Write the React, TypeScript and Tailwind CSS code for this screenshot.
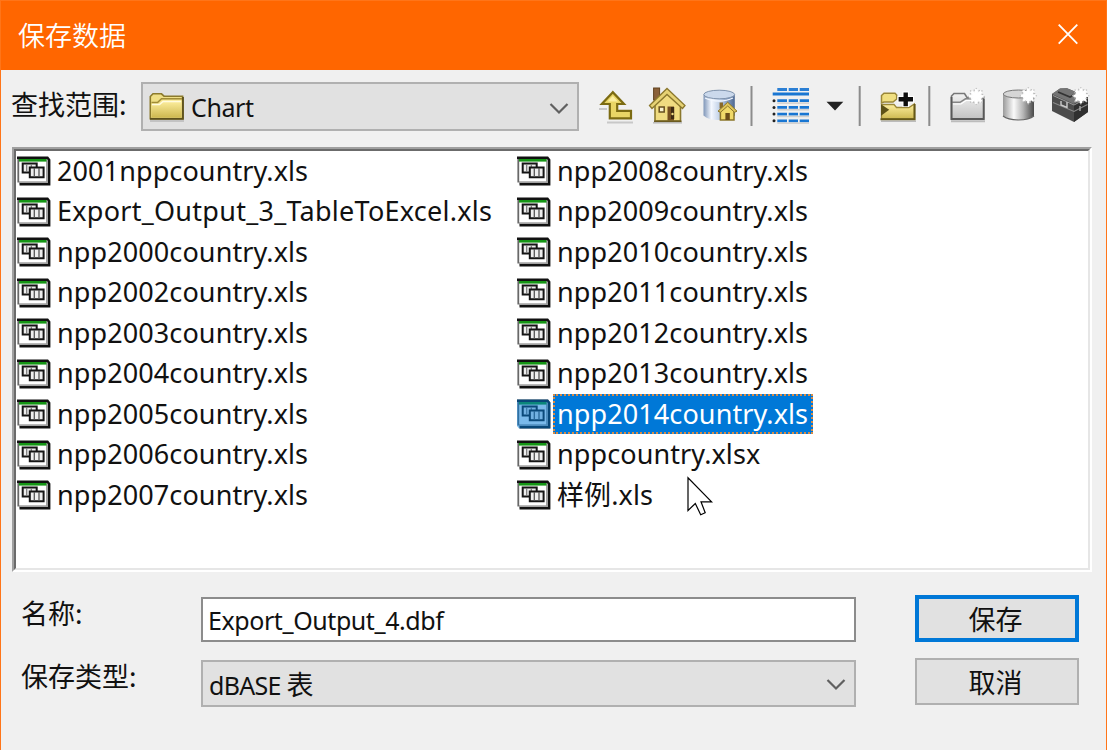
import React from "react";

const LATIN = "font-['Noto_Sans','Noto_Sans_CJK_SC',sans-serif]";
const CJK = "font-['Noto_Sans_CJK_SC',sans-serif]";

const leftFiles = [
  "2001nppcountry.xls",
  "Export_Output_3_TableToExcel.xls",
  "npp2000country.xls",
  "npp2002country.xls",
  "npp2003country.xls",
  "npp2004country.xls",
  "npp2005country.xls",
  "npp2006country.xls",
  "npp2007country.xls",
];

const rightFiles = [
  "npp2008country.xls",
  "npp2009country.xls",
  "npp2010country.xls",
  "npp2011country.xls",
  "npp2012country.xls",
  "npp2013country.xls",
  "npp2014country.xls",
  "nppcountry.xlsx",
  "样例.xls",
];

const SELECTED = "npp2014country.xls";

// Every toolbar icon shares one coordinate space; x is where its slice begins.
function ToolIcon({ x, w, children }: { x: number; w: number; children: React.ReactNode }) {
  return (
    <svg className="shrink-0" width={w} height={46} viewBox={`${x} 83 ${w} 46`} fill="none">
      {children}
    </svg>
  );
}

function Separator({ x, w, at }: { x: number; w: number; at: number }) {
  return (
    <ToolIcon x={x} w={w}>
      <rect x={at} y="86" width="2" height="40" fill="#8c8c8c" />
    </ToolIcon>
  );
}

function Sparkle({ cx, cy }: { cx: number; cy: number }) {
  const angles = [0, 45, 90, 135, 180, 225, 270, 315];
  return (
    <g transform={`translate(${cx} ${cy})`}>
      <circle r="5.8" fill="#fbfbfb" />
      {angles.map((a) => (
        <g key={a} transform={`rotate(${a})`}>
          <path d="M0 0V-7.5" stroke="#fff" strokeWidth="2.4" />
          <path d="M2.2 -5.2L3.4 -6.4" stroke="#b9b9b9" strokeWidth="1.1" />
          <circle cy="-8" r=".8" fill="#c6c6c6" />
        </g>
      ))}
    </g>
  );
}

function Gradients() {
  return (
    <svg width="0" height="0" className="absolute">
      <defs>
        <linearGradient id="gold" x1="0" y1="0" x2="0" y2="1">
          <stop offset="0" stopColor="#fff0a0" />
          <stop offset="1" stopColor="#cdb850" />
        </linearGradient>
        <linearGradient id="blueCyl" x1="0" y1="0" x2="1" y2="0">
          <stop offset="0" stopColor="#7f96b8" />
          <stop offset=".25" stopColor="#f4f8ff" />
          <stop offset=".55" stopColor="#b9cbe4" />
          <stop offset="1" stopColor="#4c6791" />
        </linearGradient>
        <linearGradient id="grayCyl" x1="0" y1="0" x2="1" y2="0">
          <stop offset="0" stopColor="#9a9a9a" />
          <stop offset=".35" stopColor="#fafafa" />
          <stop offset=".65" stopColor="#b5b5b5" />
          <stop offset="1" stopColor="#484848" />
        </linearGradient>
        <linearGradient id="grayFolder" x1="0" y1="0" x2="0" y2="1">
          <stop offset="0" stopColor="#f2f2f2" />
          <stop offset="1" stopColor="#c2c2c2" />
        </linearGradient>
      </defs>
    </svg>
  );
}

function FolderIcon() {
  return (
    <svg className="shrink-0" width="36" height="30" viewBox="149 92 36 30" fill="none">
      <path d="M150 121H184" stroke="#b9b9b9" strokeWidth="1.5" />
      <path d="M150.3 118.6V96.5L153 93.8H161.5L164 96.2H182.6V118.6Z" fill="#efdf86" stroke="#8b7a2c" strokeWidth="1.6" />
      <path d="M151.5 102.5H157.5L161.5 98.7H182" stroke="#a08c36" strokeWidth="1.4" />
      <path d="M151.5 104H159L162.5 100.5H181.6V117.5H151.5Z" fill="url(#gold)" />
      <path d="M152 104.5H159.5L163 101.5H181" stroke="#fffbe0" strokeWidth="1.4" />
      <path d="M150 118.8H183V97" stroke="#5d511c" strokeWidth="1.8" />
    </svg>
  );
}

function TableIcon({ selected }: { selected: boolean }) {
  return (
    <svg className="shrink-0" width="34" height="30" viewBox="0 0 34 30" fill="none">
      <path d="M.5 1H30L33.3 4V28.8H3L.5 26.5Z" fill="#fff" />
      <path d="M30 3V26.2H2" stroke="#a2a2a2" strokeWidth="2" />
      <path d="M1.3 1V26.5" stroke="#686868" strokeWidth="1.8" />
      <path d="M2 4.3H29.5" stroke="#159515" strokeWidth="2.6" />
      <path d="M0 1.7H30.5L32.2 3.8V28.2H2.5" stroke="#111" strokeWidth="2.4" />
      <path d="M5.7 7.4H19.7V16.4H5.7Z" fill="#eee" stroke="#151515" strokeWidth="2" />
      <path d="M9.7 8V16M14.3 8V16" stroke="#777" strokeWidth="1.2" />
      <path d="M12.8 11.6H26.6V21.2H12.8Z" fill="#eee" stroke="#151515" strokeWidth="2" />
      <path d="M17.3 12V21M22 12V21" stroke="#555" strokeWidth="1.3" />
      {selected && <path d="M0 .5H31L33.4 3.5V29.4H2L0 27Z" fill="#0078d7" fillOpacity=".52" />}
    </svg>
  );
}

function FileRow({ name }: { name: string }) {
  const selected = name === SELECTED;
  return (
    <div className="flex h-[40.5px] items-center pl-[0.6px]">
      <TableIcon selected={selected} />
      <span
        className={
          selected
            ? "ml-[2.4px] flex h-[40px] w-[260px] items-center whitespace-pre border-2 border-dotted border-[#d98b45] bg-[#0078d7] pb-[2px] pl-[2px] text-white"
            : "ml-[6.4px] flex h-[40px] items-center whitespace-pre pb-[2px]"
        }
      >
        <span className={name.startsWith("Export") ? "tracking-[0.27px]" : "tracking-[0.1px]"}>{name}</span>
      </span>
    </div>
  );
}

function Chevron() {
  return (
    <svg width="20" height="14" viewBox="0 0 20 14" fill="none">
      <path d="M1.5 3L10 11.5L18.5 3" stroke="#606060" strokeWidth="2.2" />
    </svg>
  );
}

function Toolbar() {
  return (
    <div className="flex items-center">
      <ToolIcon x={598} w={42}>
        <path d="M599 109H607M607 122.5H633" stroke="#c8c8c8" strokeWidth="2" />
        <path d="M612.8 92.2L601.8 104H609.8V118.3H631V110.8H617.2V104H624Z" fill="#e9d565" stroke="#7c6b12" strokeWidth="2.2" />
        <path d="M612.8 96L607.5 101.5H618" fill="#fbeea0" />
      </ToolIcon>
      <ToolIcon x={640} w={54}>
        <path d="M653 122.8H682" stroke="#bbb" strokeWidth="1.5" />
        <rect x="653.6" y="88" width="6" height="12" fill="#8a6039" stroke="#61431f" />
        <path d="M655 105L667 93.5L680.5 105V121H655Z" fill="#f0dc80" stroke="#8b782d" strokeWidth="1.6" />
        <path d="M649.5 105.5L667 88.5L685 105.5L682.5 108.5L667 94.5L652 108.5Z" fill="#e6d274" stroke="#8b782d" strokeWidth="1.3" />
        <rect x="659.2" y="107" width="5" height="5" fill="#f8f1ce" stroke="#67501f" strokeWidth="1.5" />
        <path d="M667.5 120.5V106.5H674V120.5" fill="#765020" />
        <rect x="671" y="107" width="3.2" height="12" fill="#3e2a12" />
        <circle cx="672.5" cy="114" r="1.2" fill="#f5e188" />
        <path d="M654 121.3H681.5" stroke="#6a5a20" strokeWidth="1.5" />
      </ToolIcon>
      <ToolIcon x={694} w={51}>
        <path d="M703.5 94.5V115.5Q708 120 719 120T734.8 115.5V94.5Z" fill="url(#blueCyl)" />
        <ellipse cx="719.2" cy="94.5" rx="15.4" ry="4.3" fill="#cbd9ec" stroke="#7f93ad" />
        <path d="M705 98Q711 101 719 101T733 98" stroke="#f2f7ff" strokeWidth="1.3" />
        <rect x="719.6" y="102.5" width="3.4" height="6" fill="#8a6a28" />
        <path d="M720.4 110L727.7 103.5L734 110V120H720.4Z" fill="#f0d969" stroke="#8b752a" strokeWidth="1.5" />
        <path d="M718 111.2L727.7 102.2L737 111.2L734.5 112.3L727.7 106L720.5 112.3Z" fill="#dfc65a" stroke="#8b752a" />
        <rect x="725.4" y="113" width="4.4" height="7" fill="#6b4d19" />
      </ToolIcon>
      <Separator x={745} w={12} at={750.5} />
      <ToolIcon x={757} w={63}>
        <path d="M777.3 89.5H787M788.7 89.5H798M799.7 89.5H809" stroke="#2b7fd4" strokeWidth="2.8" />
        <path d="M772.7 94H809" stroke="#1976d2" strokeWidth="3.2" />
        {[100.7, 107.4, 114.1, 120.8].map((y) => (
          <g key={y}>
            <circle cx="774" cy={y} r="1.5" fill="#222" />
            <path d={`M777.3 ${y}H787M788.7 ${y}H798M799.7 ${y}H809`} stroke="#1976d2" strokeWidth="2.8" />
            <path d={`M777.3 ${y + 2.4}H809`} stroke="#d0cfcd" strokeWidth="1.4" />
          </g>
        ))}
      </ToolIcon>
      <ToolIcon x={820} w={32}>
        <path d="M826.5 101.8H843.3L835 110.6Z" fill="#222" />
      </ToolIcon>
      <Separator x={852} w={14} at={858.7} />
      <ToolIcon x={866} w={56}>
        <path d="M881 121.2H916" stroke="#bbb" strokeWidth="1.5" />
        <path d="M881.5 103V95.5L884 93.2H895L896.7 95V99L893 102H884Z" fill="#f0df80" stroke="#9b8838" strokeWidth="1.5" />
        <path d="M881.5 119V104.5H894L896.5 107.5H909L914.3 104V119Z" fill="url(#gold)" stroke="#9b8838" strokeWidth="1.3" />
        <path d="M880.5 119.3H914.6V104" stroke="#655818" strokeWidth="2" />
        <path d="M881 104.3L889.2 109.8L881 115.8Z" fill="#5d5217" />
        <path d="M905.7 91.5V107M897.5 99.2H914" stroke="#fff" strokeWidth="6.5" />
        <path d="M905.7 92.5V106.2M898.6 99.2H913" stroke="#0d0d0d" strokeWidth="4.4" />
      </ToolIcon>
      <Separator x={922} w={14} at={928.3} />
      <ToolIcon x={936} w={58}>
        <path d="M951 121.2H985" stroke="#bcbcbc" strokeWidth="2" />
        <path d="M951.5 119V96L954 93.5H964.5L967 97.5H983.7V119Z" fill="url(#grayFolder)" stroke="#777" strokeWidth="1.6" />
        <path d="M952 102.3H960L965.5 98.8H983" stroke="#858585" strokeWidth="1.5" />
        <path d="M953 104H961L966 100.5H982" stroke="#fff" strokeWidth="1.2" />
        <path d="M951.5 97V119H983.7V99" stroke="#595959" strokeWidth="1.8" />
        <Sparkle cx={976.3} cy={96.5} />
      </ToolIcon>
      <ToolIcon x={994} w={50}>
        <path d="M1003 94V116Q1008 120 1018.5 120T1034 116V94Z" fill="url(#grayCyl)" />
        <path d="M1003 116Q1008 120 1018.5 120T1034 116" stroke="#666" strokeWidth="1.2" />
        <ellipse cx="1018.5" cy="94" rx="15.2" ry="4" fill="#d6d6d6" stroke="#777" />
        <Sparkle cx={1028.3} cy={95.7} />
      </ToolIcon>
      <ToolIcon x={1044} w={50}>
        <path d="M1052 94L1060 88.5L1067 88.2L1088 97V112L1074 122L1052 111Z" fill="#4c4c4c" />
        <path d="M1052 94L1060 88.5L1067 88.2L1088 97L1074 104Z" fill="#747474" />
        <path d="M1074 104L1088 97V112L1074 122Z" fill="#303030" />
        <path d="M1053 102.5L1074 111.5L1087.5 104.5" stroke="#8a8a8a" strokeWidth="1.1" />
        <path d="M1053 95.5L1074 105L1087.5 98" stroke="#999" strokeWidth="1" />
        <path d="M1061 101V105L1067 107.5V102" stroke="#ccc" strokeWidth="1.4" />
        <path d="M1058 92L1070 97L1076 94" stroke="#333" strokeWidth="1.8" />
        <path d="M1080 106V111" stroke="#aaa" strokeWidth="1.4" />
        <Sparkle cx={1080.8} cy={95.7} />
      </ToolIcon>
    </div>
  );
}

export default function App() {
  return (
    <div className="relative flex h-[750px] w-[1107px] flex-col overflow-hidden border-x border-[#ff7519] bg-[#f0f0f0] text-[#111]">
      <Gradients />
      <header className="flex h-[70px] shrink-0 items-center justify-between border-t border-[#ff7519] bg-[#ff6600] pb-[2px] pl-[17px] pr-[28px]">
        <h1 className={`${CJK} text-[27px] font-[350] leading-none text-white`}>保存数据</h1>
        <button aria-label="关闭">
          <svg width="20" height="21" viewBox="0 0 20 21" fill="none">
            <path d="M.7 .7L19.3 19.7M19.3 .7L.7 19.7" stroke="#fff" strokeWidth="1.8" />
          </svg>
        </button>
      </header>

      <div className="flex h-[77px] shrink-0 items-start pl-[10px] pt-[12px]">
        <span className={`${CJK} mt-[8px] w-[130px] whitespace-nowrap text-[27px] leading-[27px]`}>查找范围:</span>
        <div className="flex h-[49px] w-[438px] items-center border-2 border-[#b0b0b0] bg-[#e1e1e1] pl-[6px] pr-[8px]">
          <FolderIcon />
          <span className={`${LATIN} ml-[6px] mt-[2px] text-[25px] leading-none tracking-[-0.4px]`}>Chart</span>
          <span className="ml-auto mt-[2px]">
            <Chevron />
          </span>
        </div>
        <div className="ml-[19px] mt-[1px]">
          <Toolbar />
        </div>
      </div>

      <div className="ml-[11px] h-[425px] w-[1080px] shrink-0 border-2 border-b-white border-l-[#a0a0a0] border-r-white border-t-[#a0a0a0]">
        <div className={`${LATIN} flex h-full border-2 border-b-[#e6e6e6] border-l-[#6b6b6b] border-r-[#e6e6e6] border-t-[#6b6b6b] bg-white text-[27px] leading-none`}>
          <div className="w-[500px] shrink-0">
            {leftFiles.map((f) => (
              <FileRow key={f} name={f} />
            ))}
          </div>
          <div>
            {rightFiles.map((f) => (
              <FileRow key={f} name={f} />
            ))}
          </div>
        </div>
      </div>

      <div className="flex pl-[20px] pt-[23px]">
        <div className="flex flex-col gap-[18px] pt-[2px]">
          <label className="flex h-[45px] items-center">
            <span className={`${CJK} mb-[15px] w-[180px] text-[27px] leading-none`}>名称:</span>
            <input
              className={`${LATIN} h-[45px] w-[655px] border-2 border-[#8c8c8c] bg-white pl-[5px] text-[25px] tracking-[-0.42px] outline-none`}
              defaultValue="Export_Output_4.dbf"
            />
          </label>
          <div className="flex h-[47px] items-center">
            <span className={`${CJK} mb-[16px] w-[180px] text-[27px] leading-none`}>保存类型:</span>
            <div className="flex h-[47px] w-[655px] items-center justify-between border-2 border-[#b0b0b0] bg-[#e1e1e1] pl-[6px] pr-[8px]">
              <span className={`${LATIN} mt-[2px] text-[25px] leading-none`}>
                <span className="tracking-[-0.7px]">dBASE </span>
                <span className="text-[27px]">表</span>
              </span>
              <Chevron />
            </div>
          </div>
        </div>
        <div className={`${CJK} ml-[59px] flex flex-col gap-[16px] text-[27px]`}>
          <button className="flex h-[47px] w-[164px] items-center justify-center border-4 border-[#0078d7] bg-[#e1e1e1] pr-[3px] leading-none">
            保存
          </button>
          <button className="flex h-[47px] w-[164px] items-center justify-center border-2 border-[#b0b0b0] bg-[#e1e1e1] pr-[3px] leading-none">
            取消
          </button>
        </div>
      </div>

      <svg className="absolute left-[685px] top-[475px]" width="30" height="44" viewBox="686 475 30 44">
        <path
          d="M688 477.8V510.5L695.3 503.5L700.7 514.7L705.2 512.7L701 501.8H711.6Z"
          fill="#fff"
          stroke="#000"
          strokeWidth="1.2"
        />
      </svg>
    </div>
  );
}
